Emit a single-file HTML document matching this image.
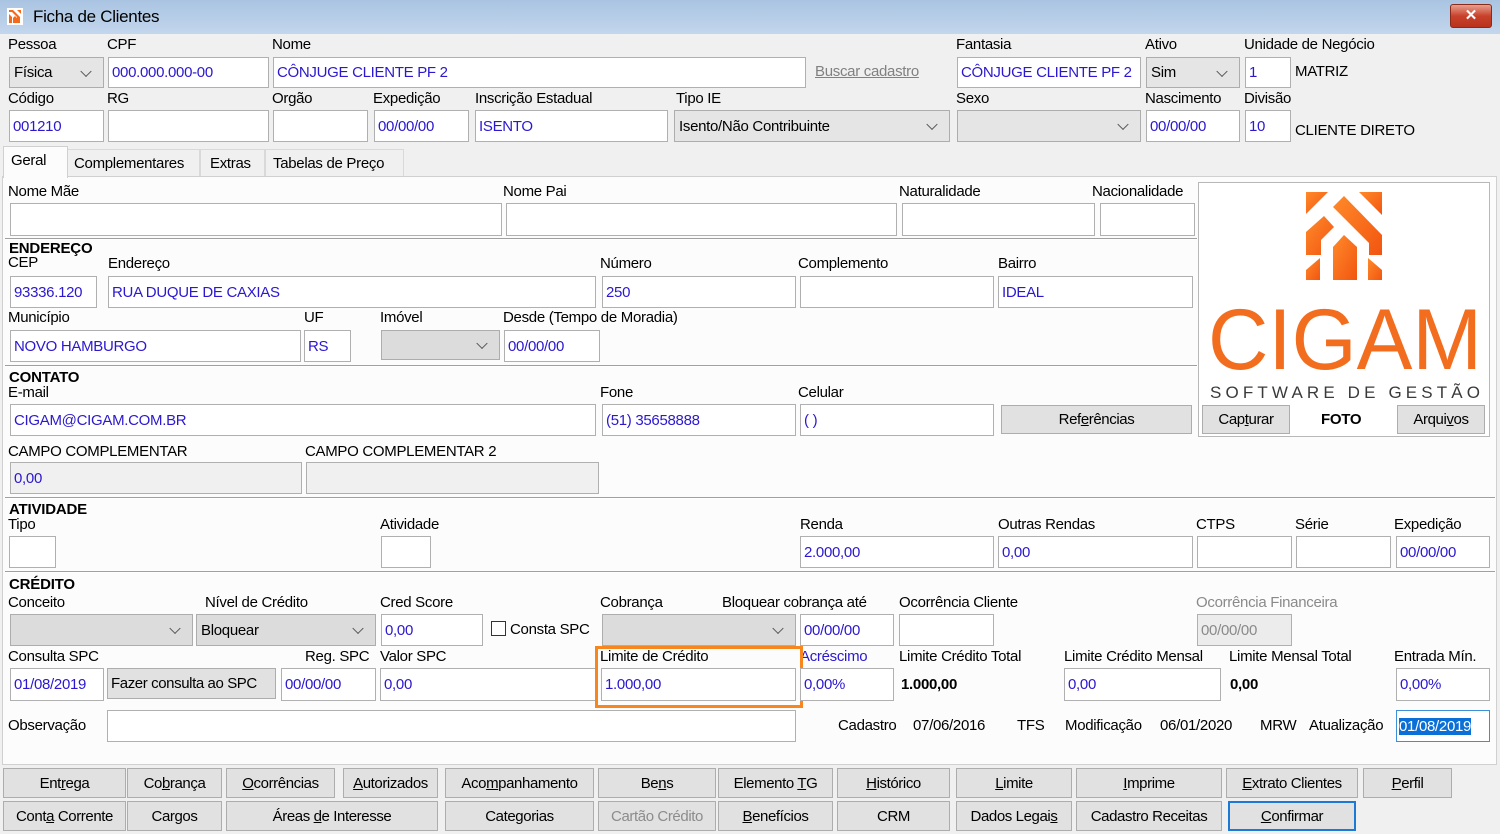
<!DOCTYPE html>
<html><head><meta charset="utf-8"><style>
*{margin:0;padding:0;box-sizing:border-box}
body{width:1500px;height:834px;overflow:hidden;background:#f0f0f0;font-family:"Liberation Sans",sans-serif;font-size:15px;position:relative;color:#000}
.a{position:absolute}
.l{position:absolute;white-space:nowrap;line-height:18px;letter-spacing:-0.3px}
.h{position:absolute;white-space:nowrap;line-height:16px;font-weight:bold;font-size:15px;letter-spacing:-0.2px}
.i{position:absolute;background:#fff;border:1px solid #b0b0b0;color:#2b18cf;display:flex;align-items:center;padding-left:3px;white-space:nowrap;letter-spacing:-0.3px;overflow:hidden}
.g{background:#f0f0f0}
.c{position:absolute;background:#e5e5e5;border:1px solid #adadad;display:flex;align-items:center;padding-left:4px;white-space:nowrap;letter-spacing:-0.3px}
.c::after{content:"";position:absolute;right:13px;top:50%;width:7px;height:7px;border-right:1px solid #555;border-bottom:1px solid #555;transform:translateY(-70%) rotate(45deg)}
.b{position:absolute;background:#e1e1e1;border:1px solid #adadad;display:flex;align-items:center;justify-content:center;white-space:nowrap;letter-spacing:-0.4px}
.sep{position:absolute;height:2px;border-top:1px solid #a0a0a0;border-bottom:1px solid #fff}
u{text-decoration:underline}
</style></head><body>
<!-- title bar -->
<div class="a" style="left:0;top:0;width:1500px;height:34px;background:linear-gradient(#a9c4e2,#c3d6ec)"></div>
<svg class="a" style="left:7px;top:8px" width="16" height="17" viewBox="0 0 16 17"><rect width="16" height="17" fill="#fff"/><path d="M2 2h4l7 7v6h-3V9L5 4H2z M10 2h4v4z M2 6l3 3v6H2z M6 10l2-2 2 2v5H6z" fill="#f26a1b"/></svg>
<div class="l" style="left:33px;top:8px;font-size:17px">Ficha de Clientes</div>
<div class="a" style="left:1450px;top:4px;width:42px;height:24px;background:linear-gradient(#e8a08f,#c8422b 50%,#b8321c);border:1px solid #8a2a1a;border-radius:3px;color:#fff;font-weight:bold;text-align:center;line-height:21px;font-size:15px">✕</div>

<!-- top rows -->
<div class="l" style="left:8px;top:36px">Pessoa</div>
<div class="l" style="left:107px;top:36px">CPF</div>
<div class="l" style="left:272px;top:36px">Nome</div>
<div class="l" style="left:956px;top:36px">Fantasia</div>
<div class="l" style="left:1145px;top:36px">Ativo</div>
<div class="l" style="left:1244px;top:36px">Unidade de Negócio</div>
<div class="c" style="left:9px;top:57px;width:95px;height:31px">Física</div>
<div class="i" style="left:108px;top:57px;width:161px;height:31px">000.000.000-00</div>
<div class="i" style="left:273px;top:57px;width:533px;height:31px">CÔNJUGE CLIENTE PF 2</div>
<div class="l" style="left:815px;top:63px;color:#808080;text-decoration:underline">Buscar cadastro</div>
<div class="i" style="left:957px;top:57px;width:184px;height:31px">CÔNJUGE CLIENTE PF 2</div>
<div class="c" style="left:1146px;top:57px;width:94px;height:31px">Sim</div>
<div class="i" style="left:1245px;top:57px;width:46px;height:31px">1</div>
<div class="l" style="left:1295px;top:63px">MATRIZ</div>

<div class="l" style="left:8px;top:90px">Código</div>
<div class="l" style="left:107px;top:90px">RG</div>
<div class="l" style="left:272px;top:90px">Orgão</div>
<div class="l" style="left:373px;top:90px">Expedição</div>
<div class="l" style="left:475px;top:90px">Inscrição Estadual</div>
<div class="l" style="left:676px;top:90px">Tipo IE</div>
<div class="l" style="left:956px;top:90px">Sexo</div>
<div class="l" style="left:1145px;top:90px">Nascimento</div>
<div class="l" style="left:1244px;top:90px">Divisão</div>
<div class="i" style="left:9px;top:110px;width:95px;height:32px">001210</div>
<div class="i" style="left:108px;top:110px;width:161px;height:32px"></div>
<div class="i" style="left:273px;top:110px;width:95px;height:32px"></div>
<div class="i" style="left:374px;top:110px;width:95px;height:32px">00/00/00</div>
<div class="i" style="left:475px;top:110px;width:193px;height:32px">ISENTO</div>
<div class="c" style="left:674px;top:110px;width:276px;height:32px">Isento/Não Contribuinte</div>
<div class="c" style="left:957px;top:110px;width:184px;height:32px"></div>
<div class="i" style="left:1146px;top:110px;width:94px;height:32px">00/00/00</div>
<div class="i" style="left:1245px;top:110px;width:46px;height:32px">10</div>
<div class="l" style="left:1295px;top:122px">CLIENTE DIRETO</div>

<!-- tabs -->
<div class="a" style="left:2px;top:176px;width:1495px;height:589px;background:#fcfcfc;border:1px solid #d0d0d0"></div>
<div class="a" style="left:67px;top:149px;width:133px;height:27px;background:#f0f0f0;border:1px solid #d9d9d9;border-bottom:none"></div>
<div class="a" style="left:200px;top:149px;width:65px;height:27px;background:#f0f0f0;border:1px solid #d9d9d9;border-bottom:none"></div>
<div class="a" style="left:265px;top:149px;width:139px;height:27px;background:#f0f0f0;border:1px solid #d9d9d9;border-bottom:none"></div>
<div class="a" style="left:3px;top:146px;width:65px;height:32px;background:#fcfcfc;border:1px solid #d0d0d0;border-bottom:none"></div>
<div class="l" style="left:11px;top:152px">Geral</div>
<div class="l" style="left:74px;top:155px">Complementares</div>
<div class="l" style="left:210px;top:155px">Extras</div>
<div class="l" style="left:273px;top:155px">Tabelas de Preço</div>

<!-- Nome mae -->
<div class="l" style="left:8px;top:183px">Nome Mãe</div>
<div class="l" style="left:503px;top:183px">Nome Pai</div>
<div class="l" style="left:899px;top:183px">Naturalidade</div>
<div class="l" style="left:1092px;top:183px">Nacionalidade</div>
<div class="i" style="left:10px;top:203px;width:492px;height:33px"></div>
<div class="i" style="left:506px;top:203px;width:391px;height:33px"></div>
<div class="i" style="left:902px;top:203px;width:193px;height:33px"></div>
<div class="i" style="left:1100px;top:203px;width:95px;height:33px"></div>

<!-- photo panel -->
<div class="a" style="left:1198px;top:182px;width:292px;height:255px;background:#fff;border:1px solid #b8b8b8"></div>
<svg class="a" style="left:1199px;top:183px" width="290" height="222" viewBox="0 0 290 222">
<defs><linearGradient id="og" x1="0" y1="0" x2="1" y2="1"><stop offset="0" stop-color="#ff8a2a"/><stop offset="1" stop-color="#f25510"/></linearGradient></defs>
<g transform="translate(107,9)" fill="url(#og)">
<path d="M0 0h22L0 22z"/>
<path d="M53 0h23v23z"/>
<path d="M27 15L38 4 76 43v20H63V51z"/>
<path d="M0 40L18 24 28 35 15 48v15H0z"/>
<path d="M27 55L38 43 51 55v33H27z"/>
<path d="M0 78L14 66v22H0z"/>
<path d="M62 66L76 78v10H62z"/>
</g>
<text x="9" y="186" font-family="Liberation Sans,sans-serif" font-size="86" fill="#f36d1e" textLength="274" lengthAdjust="spacingAndGlyphs">CIGAM</text>
<text x="11" y="215" font-family="Liberation Sans,sans-serif" font-size="17" fill="#3a3a3a" textLength="270" lengthAdjust="spacing">SOFTWARE DE GESTÃO</text>
</svg>
<div class="b" style="left:1202px;top:405px;width:88px;height:29px"><span>Cap<u>t</u>urar</span></div>
<div class="l" style="left:1321px;top:411px;font-weight:bold">FOTO</div>
<div class="b" style="left:1397px;top:405px;width:88px;height:29px"><span>Arqui<u>v</u>os</span></div>

<!-- endereco -->
<div class="sep" style="left:5px;top:238px;width:1192px"></div>
<div class="h" style="left:9px;top:241px">ENDEREÇO</div>
<div class="l" style="left:8px;top:254px">CEP</div>
<div class="l" style="left:108px;top:255px">Endereço</div>
<div class="l" style="left:600px;top:255px">Número</div>
<div class="l" style="left:798px;top:255px">Complemento</div>
<div class="l" style="left:998px;top:255px">Bairro</div>
<div class="i" style="left:10px;top:276px;width:87px;height:32px">93336.120</div>
<div class="i" style="left:108px;top:276px;width:488px;height:32px">RUA DUQUE DE CAXIAS</div>
<div class="i" style="left:602px;top:276px;width:194px;height:32px">250</div>
<div class="i" style="left:800px;top:276px;width:194px;height:32px"></div>
<div class="i" style="left:998px;top:276px;width:195px;height:32px">IDEAL</div>
<div class="l" style="left:8px;top:309px">Município</div>
<div class="l" style="left:304px;top:309px">UF</div>
<div class="l" style="left:380px;top:309px">Imóvel</div>
<div class="l" style="left:503px;top:309px">Desde (Tempo de Moradia)</div>
<div class="i" style="left:10px;top:330px;width:291px;height:32px">NOVO HAMBURGO</div>
<div class="i" style="left:304px;top:330px;width:47px;height:32px">RS</div>
<div class="c" style="left:381px;top:330px;width:119px;height:30px;background:#dcdcdc"></div>
<div class="i" style="left:504px;top:330px;width:96px;height:32px">00/00/00</div>

<!-- contato -->
<div class="sep" style="left:5px;top:365px;width:1192px"></div>
<div class="h" style="left:9px;top:370px">CONTATO</div>
<div class="l" style="left:8px;top:384px">E-mail</div>
<div class="l" style="left:600px;top:384px">Fone</div>
<div class="l" style="left:798px;top:384px">Celular</div>
<div class="i" style="left:10px;top:404px;width:586px;height:32px">CIGAM@CIGAM.COM.BR</div>
<div class="i" style="left:602px;top:404px;width:194px;height:32px">(51) 35658888</div>
<div class="i" style="left:800px;top:404px;width:194px;height:32px">( )</div>
<div class="b" style="left:1001px;top:405px;width:191px;height:29px"><span>Ref<u>e</u>rências</span></div>
<div class="l" style="left:8px;top:443px">CAMPO COMPLEMENTAR</div>
<div class="l" style="left:305px;top:443px">CAMPO COMPLEMENTAR 2</div>
<div class="i g" style="left:10px;top:462px;width:292px;height:32px">0,00</div>
<div class="i g" style="left:306px;top:462px;width:293px;height:32px"></div>

<!-- atividade -->
<div class="sep" style="left:5px;top:497px;width:1490px"></div>
<div class="h" style="left:9px;top:502px">ATIVIDADE</div>
<div class="l" style="left:8px;top:516px">Tipo</div>
<div class="l" style="left:380px;top:516px">Atividade</div>
<div class="l" style="left:800px;top:516px">Renda</div>
<div class="l" style="left:998px;top:516px">Outras Rendas</div>
<div class="l" style="left:1196px;top:516px">CTPS</div>
<div class="l" style="left:1295px;top:516px">Série</div>
<div class="l" style="left:1394px;top:516px">Expedição</div>
<div class="i" style="left:9px;top:536px;width:47px;height:32px"></div>
<div class="i" style="left:381px;top:536px;width:50px;height:32px"></div>
<div class="i" style="left:800px;top:536px;width:194px;height:32px">2.000,00</div>
<div class="i" style="left:998px;top:536px;width:195px;height:32px">0,00</div>
<div class="i" style="left:1197px;top:536px;width:95px;height:32px"></div>
<div class="i" style="left:1296px;top:536px;width:95px;height:32px"></div>
<div class="i" style="left:1396px;top:536px;width:94px;height:32px">00/00/00</div>

<!-- credito -->
<div class="sep" style="left:5px;top:571px;width:1490px"></div>
<div class="h" style="left:9px;top:577px">CRÉDITO</div>
<div class="l" style="left:8px;top:594px">Conceito</div>
<div class="l" style="left:205px;top:594px">Nível de Crédito</div>
<div class="l" style="left:380px;top:594px">Cred Score</div>
<div class="l" style="left:600px;top:594px">Cobrança</div>
<div class="l" style="left:722px;top:594px">Bloquear cobrança até</div>
<div class="l" style="left:899px;top:594px">Ocorrência Cliente</div>
<div class="l" style="left:1196px;top:594px;color:#8a8a8a">Ocorrência Financeira</div>
<div class="c" style="left:10px;top:614px;width:183px;height:32px;background:#dcdcdc"></div>
<div class="c" style="left:196px;top:614px;width:180px;height:32px;background:#dcdcdc">Bloquear</div>
<div class="i" style="left:381px;top:614px;width:102px;height:32px">0,00</div>
<div class="a" style="left:491px;top:621px;width:15px;height:15px;border:1px solid #333;background:#fff"></div>
<div class="l" style="left:510px;top:621px">Consta SPC</div>
<div class="c" style="left:602px;top:614px;width:194px;height:32px;background:#dcdcdc"></div>
<div class="i" style="left:800px;top:614px;width:94px;height:32px">00/00/00</div>
<div class="i" style="left:899px;top:614px;width:95px;height:32px"></div>
<div class="i g" style="left:1197px;top:614px;width:95px;height:32px;color:#8a8a8a;background:#ececec">00/00/00</div>

<div class="l" style="left:8px;top:648px">Consulta SPC</div>
<div class="l" style="left:305px;top:648px">Reg. SPC</div>
<div class="l" style="left:380px;top:648px">Valor SPC</div>
<div class="l" style="left:600px;top:648px">Limite de Crédito</div>
<div class="l" style="left:800px;top:648px;color:#2b18cf">Acréscimo</div>
<div class="l" style="left:899px;top:648px">Limite Crédito Total</div>
<div class="l" style="left:1064px;top:648px">Limite Crédito Mensal</div>
<div class="l" style="left:1229px;top:648px">Limite Mensal Total</div>
<div class="l" style="left:1394px;top:648px">Entrada Mín.</div>
<div class="i" style="left:10px;top:668px;width:94px;height:33px">01/08/2019</div>
<div class="b" style="left:107px;top:668px;width:169px;height:31px;justify-content:flex-start;padding-left:3px">Fazer consulta ao SPC</div>
<div class="i" style="left:281px;top:668px;width:95px;height:33px">00/00/00</div>
<div class="i" style="left:380px;top:668px;width:216px;height:33px">0,00</div>
<div class="i" style="left:601px;top:668px;width:195px;height:33px">1.000,00</div>
<div class="a" style="left:595px;top:646px;width:208px;height:62px;border:3px solid #f7861f"></div>
<div class="i" style="left:800px;top:668px;width:94px;height:33px">0,00%</div>
<div class="l" style="left:901px;top:676px;font-weight:bold">1.000,00</div>
<div class="i" style="left:1064px;top:668px;width:157px;height:33px">0,00</div>
<div class="l" style="left:1230px;top:676px;font-weight:bold">0,00</div>
<div class="i" style="left:1396px;top:668px;width:94px;height:33px">0,00%</div>

<div class="l" style="left:8px;top:717px">Observação</div>
<div class="i" style="left:107px;top:710px;width:689px;height:32px"></div>
<div class="l" style="left:838px;top:717px">Cadastro</div>
<div class="l" style="left:913px;top:717px">07/06/2016</div>
<div class="l" style="left:1017px;top:717px">TFS</div>
<div class="l" style="left:1065px;top:717px">Modificação</div>
<div class="l" style="left:1160px;top:717px">06/01/2020</div>
<div class="l" style="left:1260px;top:717px">MRW</div>
<div class="l" style="left:1309px;top:717px">Atualização</div>
<div class="i" style="left:1396px;top:710px;width:94px;height:32px;border:1px solid #3c8fd8;padding-left:2px"><span style="background:#0a6fd6;color:#fff">01/08/2019</span></div>

<!-- buttons -->
<div class="b" style="left:3px;top:768px;width:123px;height:30px"><span>Ent<u>r</u>ega</span></div>
<div class="b" style="left:127px;top:768px;width:95px;height:30px"><span>Co<u>b</u>rança</span></div>
<div class="b" style="left:226px;top:768px;width:109px;height:30px"><span><u>O</u>corrências</span></div>
<div class="b" style="left:343px;top:768px;width:95px;height:30px"><span><u>A</u>utorizados</span></div>
<div class="b" style="left:445px;top:768px;width:149px;height:30px"><span>Aco<u>m</u>panhamento</span></div>
<div class="b" style="left:598px;top:768px;width:118px;height:30px"><span>Be<u>n</u>s</span></div>
<div class="b" style="left:718px;top:768px;width:115px;height:30px"><span>Elemento <u>T</u>G</span></div>
<div class="b" style="left:837px;top:768px;width:113px;height:30px"><span><u>H</u>istórico</span></div>
<div class="b" style="left:956px;top:768px;width:116px;height:30px"><span><u>L</u>imite</span></div>
<div class="b" style="left:1076px;top:768px;width:146px;height:30px"><span><u>I</u>mprime</span></div>
<div class="b" style="left:1226px;top:768px;width:132px;height:30px"><span><u>E</u>xtrato Clientes</span></div>
<div class="b" style="left:1363px;top:768px;width:89px;height:30px"><span><u>P</u>erfil</span></div>

<div class="b" style="left:3px;top:801px;width:123px;height:30px"><span>Cont<u>a</u> Corrente</span></div>
<div class="b" style="left:127px;top:801px;width:95px;height:30px"><span>Cargos</span></div>
<div class="b" style="left:226px;top:801px;width:212px;height:30px"><span>Áreas <u>d</u>e Interesse</span></div>
<div class="b" style="left:445px;top:801px;width:149px;height:30px"><span>Categorias</span></div>
<div class="b" style="left:598px;top:801px;width:118px;height:30px;color:#8c8c8c"><span>Cartão Crédito</span></div>
<div class="b" style="left:718px;top:801px;width:115px;height:30px"><span><u>B</u>enefícios</span></div>
<div class="b" style="left:837px;top:801px;width:113px;height:30px"><span>CRM</span></div>
<div class="b" style="left:956px;top:801px;width:116px;height:30px"><span>Dados Legai<u>s</u></span></div>
<div class="b" style="left:1076px;top:801px;width:146px;height:30px"><span>Cadastro Receitas</span></div>
<div class="b" style="left:1228px;top:801px;width:128px;height:30px;border:2px solid #1c7ad4"><span><u>C</u>onfirmar</span></div>
</body></html>
